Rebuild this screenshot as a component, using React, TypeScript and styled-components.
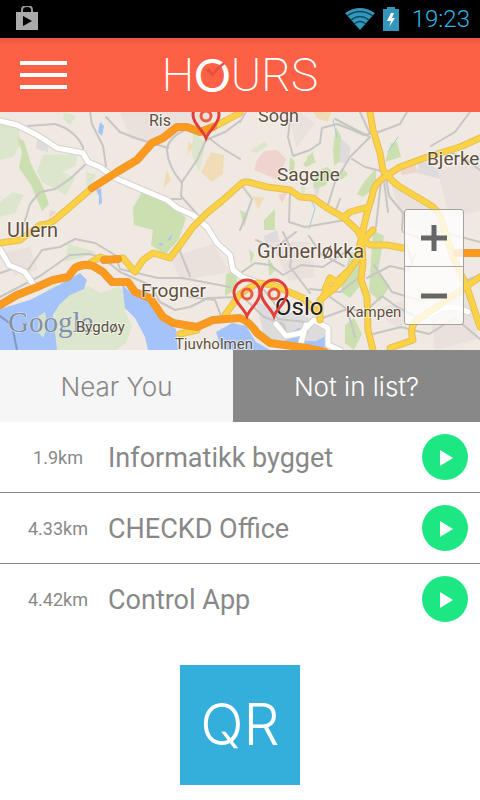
import React from "react";
import styled, { createGlobalStyle } from "styled-components";

const GlobalStyle = createGlobalStyle`
  * { box-sizing: border-box; }
  body { margin: 0; background: #fff; font-family: Roboto, sans-serif; }
  button { border: 0; padding: 0; margin: 0; font: inherit; cursor: pointer; }
  svg { display: block; }
`;

const Screen = styled.div`
  display: flex;
  flex-direction: column;
  min-height: 100vh;
`;

const StatusBar = styled.div`
  display: flex;
  align-items: center;
  justify-content: space-between;
  height: 38px;
  padding: 0 10px 0 15px;
  background: #000;
`;

const StatusIcons = styled.div`
  display: flex;
  align-items: center;
  gap: 8px;
`;

const Clock = styled.time`
  padding-left: 5px;
  color: #33b5e5;
  font-size: 24px;
  line-height: 38px;
  font-weight: 300;
`;

const Header = styled.header`
  display: grid;
  grid-template-columns: 48px 1fr 48px;
  align-items: center;
  height: 74px;
  padding: 0 20px;
  background: linear-gradient(#e8583f 0, #fd6145 8px);
`;

const MenuButton = styled.button`
  display: flex;
  flex-direction: column;
  gap: 8px;
  width: 47px;
  background: none;
`;

const MenuLine = styled.span`
  height: 4px;
  background: #fff;
`;

const Logo = styled.h1`
  display: flex;
  justify-content: center;
  margin: 0;
  color: #fff;
  font-size: 46px;
  line-height: 74px;
  font-weight: 200;
`;

const LogoRound = styled.span`
  position: relative;
  font-family: Lato, sans-serif;
  font-weight: 400;
`;

const LogoTick = styled.svg`
  position: absolute;
  left: 12px;
  top: 21px;
`;

const MapPanel = styled.section`
  position: relative;
  height: 238px;
  overflow: hidden;
  background: #f0e9e1;
`;

const MapDrawing = styled.svg`
  width: 100%;
  height: 100%;
`;

const ZoomControls = styled.div`
  position: absolute;
  right: 16px;
  bottom: 25px;
  width: 60px;
  border: 1px solid #a5a39d;
  border-radius: 3px;
  background: rgba(255, 255, 255, 0.8);
`;

const ZoomButton = styled.button<{ $divided?: boolean }>`
  display: grid;
  place-items: center;
  width: 100%;
  height: 57px;
  background: none;
  border-bottom: ${(p) => (p.$divided ? "1px solid #a9a9a6" : "0")};
`;

const Tabs = styled.div`
  display: grid;
  grid-template-columns: 233fr 247fr;
`;

const Tab = styled.button<{ $dark?: boolean }>`
  height: 72px;
  padding-top: 2px;
  background: ${(p) => (p.$dark ? "#888" : "#f6f6f6")};
  color: ${(p) => (p.$dark ? "#fff" : "#888")};
  font-family: Inter, sans-serif;
  font-size: 26px;
  line-height: 70px;
  font-weight: 300;
`;

const List = styled.ul`
  list-style: none;
  margin: 0;
  padding: 0;
`;

const Row = styled.li`
  display: grid;
  grid-template-columns: 100px 1fr 46px;
  align-items: center;
  height: 71px;
  padding: 0 12px 0 8px;
  color: #888;
  border-bottom: 1px solid #888;
  &:last-child { border-bottom-color: transparent; }
`;

const Distance = styled.span`
  padding-top: 2px;
  font-size: 18px;
  line-height: 24px;
  text-align: center;
`;

const Place = styled.span`
  padding-top: 2px;
  font-size: 27px;
  line-height: 36px;
`;

const PlayButton = styled.button`
  display: grid;
  place-items: center;
  width: 46px;
  height: 46px;
  border-radius: 50%;
  background: #1ce783;
`;

const Footer = styled.footer`
  display: flex;
  justify-content: center;
  padding: 30px 0 15px;
`;

const QrButton = styled.button`
  width: 120px;
  height: 120px;
  background: #34afdc;
  color: #fff;
  font-family: Inter, sans-serif;
  font-size: 57px;
  line-height: 120px;
  font-weight: 300;
`;

const places = [
  { distance: "1.9km", name: "Informatikk bygget" },
  { distance: "4.33km", name: "CHECKD Office" },
  { distance: "4.42km", name: "Control App" },
];

const yellowRoads = [
  "M92 76 57 106Q50 113 40 113L20 128 0 131",
  "M213 15 227 8 240 1",
  "M90 151 100 145 110 148 123 146 135 160 143 148 153 141 170 146 180 133 193 115 207 101 223 88 242 71Q246 69 252 71L267 75 290 78 300 85 313 86 327 96 343 105 357 118 363 128 370 133 387 133 403 136",
  "M370 0 373 18 380 41 383 58Q389 67 400 75L427 91Q440 98 442 110L453 145 467 175 480 215",
  "M480 26 460 35 427 45 400 55 383 66Q373 73 372 85L367 101 363 118 357 148 340 171 320 188V208",
  "M368 95 350 100 343 106",
  "M363 118 362 131 363 151 361 168 367 185 368 218 373 238",
  "M373 118 360 132",
  "M480 165 447 188 417 208Q409 215 413 228L390 236",
  "M225 203 240 182 257 171 273 173 303 186 317 201",
  "M330 166 337 170 333 178 325 177ZM324 183 327 178M337 169 348 159",
  "M180 222 197 218",
];

const orangeRoads = [
  "M92 76 117 60 137 48 152 31 163 26 177 15 187 15 200 20 213 15",
  "M0 193 17 183 37 175 53 168 68 165 75 156Q83 151 93 154L103 160 112 170 128 170 135 180 150 186 163 205 173 211 197 215 213 208 240 206Q249 209 257 221L270 231 307 236 325 240",
  "M104 148 118 147",
  "M457 141H480",
];

const greyRoads = [
  "M28 14 55 12Q75 18 83 35V41M88 50 70 67 55 77 40 80 30 92 24 112",
  "M90 0 92 12 103 34 106 54M106 5 120 20 138 27 155 32 168 36",
  "M185 18Q168 26 167 38 168 55 182 71L181 84 204 110M206 28 197 48 182 70M168 87 181 87M206 28 225 20 240 9M206 24 222 36 240 47",
  "M240 10 246 0M291 0 288 25 293 44 310 38 320 31 322 16 337 12 350 17 364 23 376 21 400 12 407 0",
  "M370 25 350 45 335 70 327 96M352 47 365 55 381 59M335 7 368 24",
  "M240 71 252 87 247 101 240 118M290 80 289 110 305 115 345 108M335 100 340 87",
  "M386 65 389 84 403 101 402 118M376 115 382 60M383 61 388 100",
  "M0 161 15 156 28 158 42 138 60 135 75 127 95 131 115 143 120 157 158 166 182 166 230 175",
  "M0 185 40 164 70 143 90 142 103 146 120 160 150 173 160 190 175 198 190 195 208 186 240 185",
  "M179 137 190 164M215 188 222 207M190 185 215 188",
  "M242 160 255 151 270 153 283 163 301 153 323 155 350 137M283 120 292 139 290 155 310 181",
  "M256 128 275 136 296 120M309 124 321 142 344 154M310 177 340 180 361 164",
  "M367 166 390 154 408 158 415 143M374 153 392 180 418 188M369 196 382 184 397 195 417 205",
  "M330 185 347 197 355 225M320 207 350 196 366 202M373 222 401 215 429 222 455 206 480 227",
  "M403 120 419 126 438 119 480 130M462 170 480 163M405 130 413 152",
  "M245 187 264 205 283 212 291 232M258 180 278 207 315 211M264 178 284 204",
  "M360 0 370 22M450 40 464 46 480 58M470 0 455 20 431 34",
];

const parks = [
  "M17 25 24 29 31 52 43 75 49 92 42 99 31 73 19 56 22 40Z",
  "M142 80 160 88 177 97 186 106 179 127 165 143 151 133 153 118 134 113 133 96Z",
  "M311 42 316 50 306 55 303 53ZM313 76 316 60 327 55 333 60 325 74ZM336 62 343 57 348 62 341 68Z",
  "M391 31 397 30 401 45 385 50ZM376 56 376 75 363 85 357 82 364 70Z",
  "M336 15 341 24 340 49 334 54 333 37ZM306 46 313 40 314 47ZM290 45 295 50 293 66 289 60Z",
  "M350 140 362 144 359 175 350 186 341 180 345 161ZM373 118 384 124 378 159 390 174 380 189 369 180Z",
  "M415 174 429 183 422 193ZM268 145 276 158 269 164ZM249 137 254 142 251 153ZM226 162 236 158 238 176 225 184Z",
  "M345 213 354 206 362 222 354 238 345 231ZM240 98 248 102 244 115ZM264 108 275 97 275 118H264Z",
];

const paleParks = [
  "M43 43 77 42 76 54 62 60 75 66 66 83 42 70 37 59Z",
  "M0 12 18 13 21 32 13 45 0 48ZM0 90 13 80 24 83 15 101 0 105ZM64 0 76 4 70 13 63 7Z",
  "M56 195 73 180 88 174 101 181 120 174 128 190 125 200 132 214 126 231 116 238H57L53 217Z",
  "M68 132 96 140 80 146 65 150ZM40 184 56 171 59 177 44 188ZM42 200 46 211 43 224 38 221Z",
  "M250 39 265 29 268 34 256 41ZM300 68 306 76 302 88ZM86 60 96 62 87 85ZM193 20 206 31 199 60 192 44Z",
];

const builtUp = [
  ["#efd3ce", "M264 39 277 38 286 47 279 68 254 58 257 48ZM400 57 414 50 418 60 402 63ZM278 83 288 80 282 91ZM50 98 57 100 49 106Z"],
  ["#f1dcb8", "M211 40 224 43 223 62 212 70 201 60ZM167 58 171 68 163 76ZM188 30 194 33 188 43ZM313 0 331 0 328 10 317 6ZM253 84 264 86 258 97Z"],
  ["#dedbdc", "M37 28 48 30 48 40 36 37ZM340 25 351 36 347 52 338 50ZM420 48 450 63 444 68 417 61ZM313 68 321 73 316 88ZM354 150 361 162 354 172ZM264 124 277 118 280 130 265 132ZM256 190 307 205 330 219 323 236 265 228Z"],
  ["#ebe1dc", "M120 0H220L190 18 160 30 130 27ZM5 140 30 135 38 158 14 164ZM300 0 315 12 296 36 291 12ZM390 70 430 94 448 130 405 113ZM438 60 480 42V99L449 105ZM170 145 213 132 230 160 181 169ZM270 130 310 130 315 165 289 169ZM373 199 410 186 401 218ZM430 200 469 177 478 227 435 238Z"],
];

const labels: { text: string; x: number; y: number; size: number; color?: string }[] = [
  { text: "Ris", x: 149, y: 14, size: 16 },
  { text: "Sogn", x: 258, y: 10, size: 18 },
  { text: "Sagene", x: 277, y: 69, size: 19 },
  { text: "Bjerke", x: 427, y: 53, size: 19 },
  { text: "Ullern", x: 7, y: 125, size: 20 },
  { text: "Grünerløkka", x: 257, y: 146, size: 20 },
  { text: "Frogner", x: 141, y: 185, size: 19 },
  { text: "Bygdøy", x: 76, y: 220, size: 15 },
  { text: "Kampen", x: 346, y: 205, size: 15 },
  { text: "Tjuvholmen", x: 175, y: 237, size: 15 },
  { text: "Oslo", x: 275, y: 203, size: 24, color: "#222" },
];

const pins = [
  [206, 4],
  [247, 182],
  [274, 182],
];

function CityMap() {
  return (
    <MapDrawing viewBox="0 0 480 238" preserveAspectRatio="xMidYMid slice" role="img" aria-label="Map of Oslo">
      <path fill="#f0e9e1" d="M0 0H480V238H0Z" />
      {builtUp.map(([fill, d]) => <path key={fill} fill={fill} d={d} />)}
      {paleParks.map((d) => <path key={d} fill="#dce6cd" d={d} />)}
      {parks.map((d) => <path key={d} fill="#cbdfb0" d={d} />)}
      <g fill="#a5c3fb">
        <path d="M0 197 30 188 57 174 80 161 87 168 84 177 70 183 59 193 53 203 55 220 57 238H0Z" />
        <path d="M122 172 133 183 151 190 164 210 176 217 178 238H148L145 225 135 206 125 196Z" />
        <path d="M216 220 232 211 246 214 256 230 270 238H222ZM286 223 299 216 309 220 300 229 316 229 326 224 331 236 285 232Z" />
        <path d="M100 10 104 14 102 24 98 20ZM96 78 101 76 102 91 99 93 99 84ZM159 131 164 132 160 134ZM168 127 173 121 170 129Z" />
      </g>
      <path fill="#d8e4c6" d="M39 204 45 200 48 214 43 226 38 220Z" />
      <g fill="none" strokeLinejoin="round" strokeLinecap="round">
        <path stroke="#9ccfe0" strokeWidth="1" d="M333 8 337 25M308 82 315 96 309 117M398 25 388 40" />
        <g stroke="#c8c5c5" strokeWidth="2">
          {greyRoads.map((d) => <path key={d} d={d} />)}
          <path stroke="#8298bd" d="M0 204 12 213 17 238" />
        </g>
        {[["#d6d1cc", 7], ["#fff", 5]].map(([color, width]) => (
          <path
            key={color}
            stroke={color as string}
            strokeWidth={width}
            d="M0 9 17 13 37 23 57 36 83 41 88 50 100 55 115 66 143 78 167 88 177 96 193 103 207 115 217 131 230 143 233 158 242 165 262 172M0 137 9 153 25 160 33 172M276 212 286 224 301 221 314 208 328 216 328 233 340 238M306 213 301 231M430 203Q449 189 468 200"
          />
        ))}
        <g stroke="#e6be5c" strokeWidth="7">{yellowRoads.map((d) => <path key={d} d={d} />)}</g>
        <g stroke="#fbd243" strokeWidth="5">{yellowRoads.map((d) => <path key={d} d={d} />)}</g>
        <g stroke="#eb9a38" strokeWidth="8">{orangeRoads.map((d) => <path key={d} d={d} />)}</g>
        <g stroke="#fb9a1c" strokeWidth="6">{orangeRoads.map((d) => <path key={d} d={d} />)}</g>
      </g>
      <text x="8" y="220" fontFamily="Liberation Serif, serif" fontSize="29" fill="#8191a5" stroke="#e1e8ef" strokeWidth="1" paintOrder="stroke">
        Google
      </text>
      <g fontFamily="Roboto, sans-serif" stroke="#fff" strokeOpacity="0.6" strokeWidth="2" strokeLinejoin="round" paintOrder="stroke">
        {labels.map((l) => (
          <text key={l.text} x={l.x} y={l.y} fontSize={l.size} fill={l.color ?? "#5d503e"}>{l.text}</text>
        ))}
      </g>
      <g fill="none" stroke="#e43e39" strokeWidth="3" strokeLinejoin="miter">
        {pins.map(([x, y]) => (
          <g key={x} transform={`translate(${x} ${y})`}>
            <path d="M0 22C-3 14-13 8-13-1A13 13 0 0 1 13-1C13 8 3 14 0 22Z" />
            <circle cy="0" r="5" stroke="#ed5a3d" />
          </g>
        ))}
      </g>
    </MapDrawing>
  );
}

export default function App() {
  return (
    <>
      <GlobalStyle />
      <Screen>
        <StatusBar>
          <svg width="24" height="26" viewBox="0 0 24 26" aria-hidden="true">
            <path d="M7 7V4Q7 0 12 0T17 4V7" fill="none" stroke="#999" strokeWidth="2" />
            <path d="M1 6H23V24H1Z" fill="#aaa" />
            <path d="M8 10V20L17 15Z" fill="#000" />
          </svg>
          <StatusIcons>
            <svg width="30" height="24" viewBox="0 0 30 24" aria-hidden="true">
              <path d="M0 6Q15-4 30 6L15 23Z" fill="#3295b9" />
              <path d="M2 9Q15 0 28 9M6 13Q15 6 24 13M9 17Q15 12 21 17" fill="none" stroke="#0b455c" strokeWidth="1.5" />
            </svg>
            <svg width="16" height="24" viewBox="0 0 16 24" aria-hidden="true">
              <path d="M4 0H12V2H16V24H0V2H4Z" fill="#3295b9" />
              <path d="M8 6 4 14H8L6 20 12 11H9L11 6Z" fill="#fff" />
            </svg>
            <Clock>19:23</Clock>
          </StatusIcons>
        </StatusBar>
        <Header>
          <MenuButton aria-label="Menu">
            <MenuLine />
            <MenuLine />
            <MenuLine />
          </MenuButton>
          <Logo>
            <span>H</span>
            <LogoRound>
              O
              <LogoTick width="20" height="20" viewBox="0 0 20 20" aria-hidden="true">
                <path d="M0 11 3 9 7 14Q11 7 18 3L19 5Q12 10 7 18Z" fill="#e8503c" />
              </LogoTick>
            </LogoRound>
            <span>URS</span>
          </Logo>
        </Header>
        <MapPanel>
          <CityMap />
          <ZoomControls>
            <ZoomButton $divided aria-label="Zoom in">
              <svg width="26" height="26" viewBox="0 0 26 26"><path d="M13 0V26M0 13H26" stroke="#666" strokeWidth="5" /></svg>
            </ZoomButton>
            <ZoomButton aria-label="Zoom out">
              <svg width="26" height="26" viewBox="0 0 26 26"><path d="M0 13H26" stroke="#666" strokeWidth="5" /></svg>
            </ZoomButton>
          </ZoomControls>
        </MapPanel>
        <Tabs>
          <Tab>Near You</Tab>
          <Tab $dark>Not in list?</Tab>
        </Tabs>
        <List>
          {places.map((p) => (
            <Row key={p.name}>
              <Distance>{p.distance}</Distance>
              <Place>{p.name}</Place>
              <PlayButton aria-label={`Start at ${p.name}`}>
                <svg width="46" height="46" viewBox="0 0 46 46"><path d="M18 16V32L31 24Z" fill="#fff" /></svg>
              </PlayButton>
            </Row>
          ))}
        </List>
        <Footer>
          <QrButton>QR</QrButton>
        </Footer>
      </Screen>
    </>
  );
}
